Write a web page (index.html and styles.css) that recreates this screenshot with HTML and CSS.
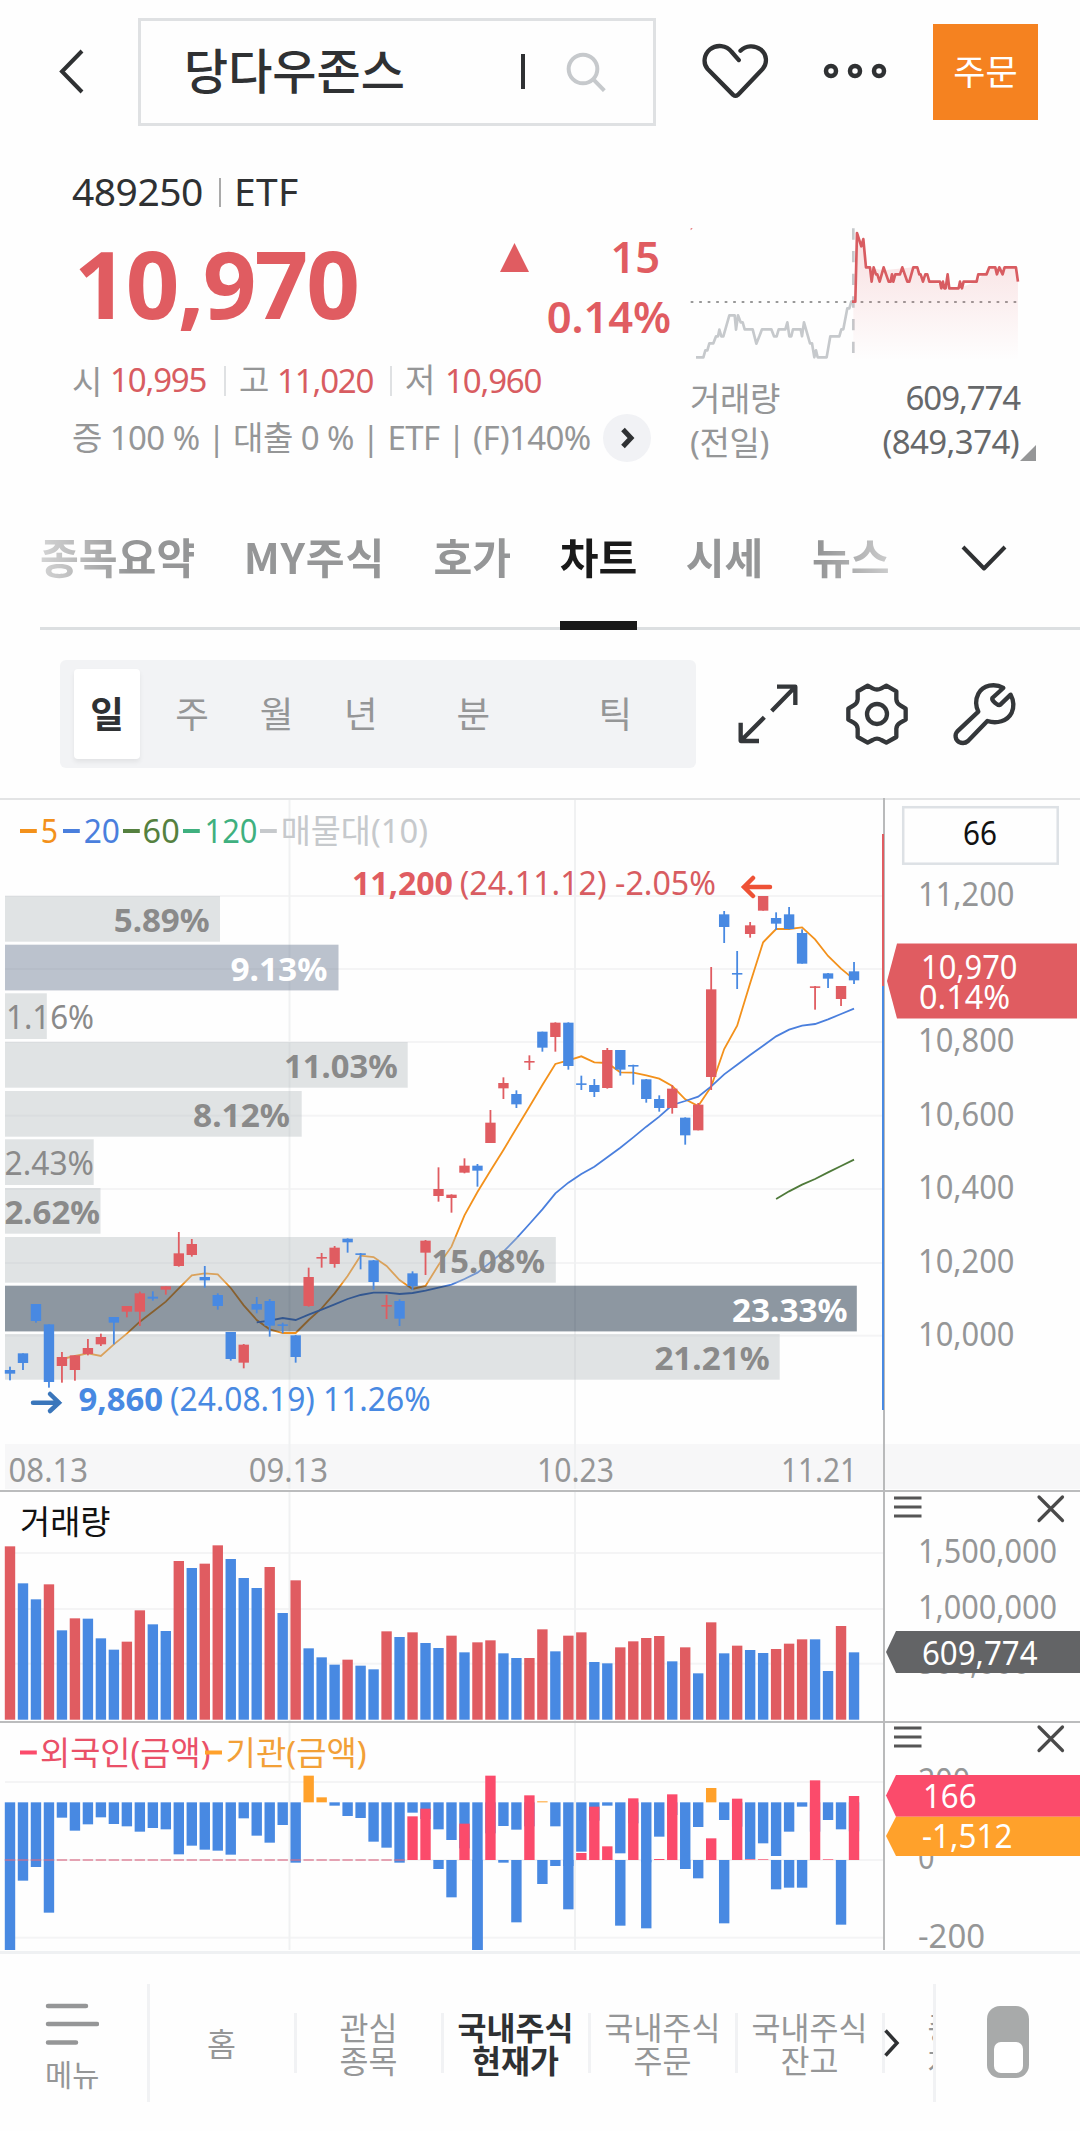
FILE: index.html
```html
<!DOCTYPE html>
<html lang="ko">
<head>
<meta charset="utf-8">
<title>당다우존스 차트</title>
<link rel="stylesheet" href="styles.css">
</head>
<body>
<header class="topbar">
  <svg class="back" viewBox="0 0 138 144"><path d="M82 51 62 71.500 82 92"/></svg>
  <div class="search">
    <span class="search-text">당다우존스</span>
    <i class="cursor"></i>
    <svg class="search-icon" viewBox="78 98 120 120"><circle cx="129" cy="149" r="43"/><path d="M160 180 193 214"/></svg>
  </div>
  <svg class="heart" viewBox="483 66 208 174"><path d="M597 120 575 95C560 75 530 72 510 88C492 103 488 130 503 147L580 225Q587 231 594 225L668 148C684 130 682 103 663 88C644 74 618 76 602 92"/></svg>
  <svg class="more" viewBox="0 0 66 20"><circle cx="9" cy="10" r="5"/><circle cx="33" cy="10" r="5"/><circle cx="57" cy="10" r="5"/></svg>
  <button class="order">주문</button>
</header>

<section class="quote">
  <div class="quote-main">
    <div class="code"><span class="code-num">489250</span><i></i><span>ETF</span></div>
    <div class="price-row">
      <strong class="price">10,970</strong>
      <svg class="up" viewBox="0 0 29 29"><path d="M14.500 0 29 29H0z"/></svg>
      <div class="change"><span class="diff">15</span><span>0.14%</span></div>
    </div>
    <div class="ohl">
      <span class="ohl-item"><em>시</em><b>10,995</b></span>
      <span class="ohl-item"><em>고</em><b>11,020</b></span>
      <span class="ohl-item"><em>저</em><b>10,960</b></span>
    </div>
    <div class="margin-row">
      <span class="margin-text">증 100 % | 대출 0 % | ETF | (F)140%</span>
      <span class="go"><svg viewBox="0 0 48 48"><path d="M20 15.500 28 24 20 32.500"/></svg></span>
    </div>
  </div>
  <div class="quote-side">
    <svg class="spark" viewBox="88 80 1000 400">
      <defs><linearGradient id="fade" x1="0" y1="0" x2="0" y2="1"><stop offset="0" stop-color="#e05c61" stop-opacity=".2"/><stop offset="1" stop-color="#e05c61" stop-opacity="0"/></linearGradient></defs>
      <path d="M578 84V460" stroke="#c6c9cc" stroke-width="8" stroke-dasharray="34 34"/>
      <path d="M90 305H1070" stroke="#999" stroke-width="6" stroke-dasharray="8 17.500"/>
      <path fill="url(#fade)" d="M578 304 584 304 589 98 602 138 608 116 616 201 669 210 758 201 806 244 894 264 948 244 986 201 1066 201 1072 244V480H578z"/>
      <polyline class="prev" points="106,471 128,471 134,450 140,450 146,429 158,429 166,408 172,408 176,388 182,408 188,408 206,345 222,345 226,388 232,345 240,366 246,366 252,387 276,387 287,430 296,408 304,387 332,387 340,408 348,408 354,387 374,387 380,366 386,408 392,408 397,387 420,387 424,408 430,366 448,429 454,429 461,471 466,450 471,471 498,471 509,408 536,408 542,387 548,387 560,324 566,324 572,304 578,304"/>
      <polyline class="today" points="574,304 584,304 589,98 602,138 608,116 616,201 628,201 633,244 639,201 646,222 650,222 657,244 669,201 684,244 690,244 694,222 698,244 704,222 718,222 725,201 740,244 746,244 758,201 770,201 776,222 780,222 787,244 794,222 800,222 806,244 838,244 842,264 847,244 851,264 855,264 861,222 866,264 894,264 898,244 904,264 909,244 948,244 953,222 978,222 986,201 1004,201 1009,222 1016,201 1026,222 1032,201 1066,201 1072,244"/>
      <path d="M90 84h6l-6 6z" fill="#e05c61"/>
    </svg>
    <div class="vol"><span>거래량</span><b>609,774</b></div>
    <div class="vol"><span>(전일)</span><b class="prev-vol">(849,374)</b><i class="corner"></i></div>
  </div>
</section>

<nav class="tabs">
  <div class="tab-list">
    <a>종목요약</a><a class="my">MY주식</a><a>호가</a><a class="on">차트</a><a>시세</a><a>뉴스</a>
  </div>
  <svg class="tab-more" viewBox="0 0 50 30"><path d="M4 4 25 25.500 46 4"/></svg>
</nav>

<section class="tools">
  <div class="periods">
    <span class="sel">일</span><span>주</span><span>월</span><span>년</span><span class="wide">분</span><span class="wider">틱</span>
  </div>
  <svg class="tool" viewBox="45 60 204 204"><path class="square" d="M171 80H226V135M226 80 155 153M62 188V243H117M62 243 133 172"/></svg>
  <svg class="tool" viewBox="366 60 204 204"><path d="M440 77 455 85Q468 92 481 85L496 77 526 94V118Q527 130 538 136L554 146V179L538 188Q527 194 526 206V231L496 248 481 240Q468 232 455 240L440 248 410 231V206Q409 194 398 188L382 179V146L398 136Q409 130 410 118V94Z"/><circle cx="468" cy="162" r="30"/></svg>
  <svg class="tool" viewBox="693 60 204 204"><path d="M850 84C824 69 789 75 775 101C766 119 767 138 775 155L712 214C703 224 706 240 717 246C727 251 736 250 744 243L802 183C830 192 862 184 875 158C883 139 881 121 872 104L841 134C834 139 814 121 817 114Z"/></svg>
</section>

<svg class="panel" id="price" viewBox="0 798 1080 692" height="692"></svg>
<svg class="panel" id="volume" viewBox="0 1490 1080 231" height="231"></svg>
<svg class="panel" id="investor" viewBox="0 1721 1080 233" height="233"></svg>

<footer class="bottom">
  <div class="menu">
    <svg viewBox="0 0 54 42"><path d="M3 3H41M3 21H52M3 39.500H31"/></svg>
    <span>메뉴</span>
  </div>
  <div class="links">
    <a>홈</a><a>관심<br>종목</a><a class="on">국내주식<br>현재가</a><a>국내주식<br>주문</a><a>국내주식<br>잔고</a><a>종합<br>차트</a>
    <svg class="next" viewBox="0 0 16 30"><path d="M1.500 2.500 13 15 1.500 27.500"/></svg>
  </div>
  <div class="toggle"><i></i></div>
</footer>
<script src="chart.js"></script>
</body>
</html>
```
FILE: styles.css
```css
* { box-sizing: border-box; }
body {
  margin: 0;
  width: 1080px;
  height: 2131px;
  overflow: hidden;
  background: #fefefe;
  color: #2f3133;
  font-family: "Noto Sans", "Noto Sans CJK KR", sans-serif;
}
svg { display: block; fill: none; }
b, em { font-weight: inherit; font-style: normal; }

/* top bar */
.topbar {
  display: grid;
  grid-template-columns: 138px 518px 160px 117px 105px;
  height: 144px;
  align-items: start;
}
.back { width: 138px; height: 144px; stroke: #2f3133; stroke-width: 4; }
.search {
  height: 108px;
  margin-top: 18px;
  border: 3px solid #dfe1e3;
  display: flex;
  align-items: center;
  padding: 0 47px 0 43px;
}
.search-text { font: 500 48px/100px "Noto Sans CJK KR", sans-serif; width: 337px; margin-top: -8px; }
.cursor { width: 4px; height: 35px; background: #2f3133; margin: 0 auto 2px 0; }
.search-icon { width: 40px; height: 40px; stroke: #c6c9cc; stroke-width: 12; }
.heart { width: 69px; height: 58px; margin: 42px 0 0 45px; stroke: #2f3133; stroke-width: 13; stroke-linecap: round; stroke-linejoin: round; }
.more { width: 66px; height: 20px; margin: 61px 0 0 6px; stroke: #2f3133; stroke-width: 4.500; }
.order {
  height: 96px;
  margin: 24px 0 0;
  padding: 0 0 6px;
  border: 0;
  background: #f58220;
  color: #fff;
  font: 400 35px "Noto Sans CJK KR", sans-serif;
}

/* quote */
.quote { display: grid; grid-template-columns: 617px 1fr; height: 346px; padding: 24px 0 0 73px; }
.quote-main { color: #959697; }
.code { display: flex; align-items: center; height: 44px; margin: 0 0 2px -1px; font-size: 39px; color: #2f3133; font-weight: 390; }
.code-num { width: 147px; letter-spacing: -.5px; }
.code i { width: 2px; height: 29px; margin: 4px 13px 0 0; background: #aaa; }
.code span:last-child { letter-spacing: .3px; }
.price-row { display: flex; align-items: center; height: 144px; color: #e05c61; font-weight: 600; }
.price { width: 427px; padding-left: 1px; font-size: 94px; line-height: 138px; font-weight: 680; letter-spacing: -1.900px; margin-top: -6px; }
.up { width: 29px; height: 29px; fill: #e05c61; margin-top: -57px; }
.change { width: 142px; display: flex; flex-direction: column; align-items: flex-end; font-size: 43.500px; line-height: 60px; letter-spacing: -.1px; }
.diff { margin-right: 11px; }
.ohl { display: flex; height: 45px; align-items: center; font-size: 33px; }
.ohl-item { display: flex; width: 166px; }
.ohl-item em { width: 38px; margin: -1px 0 0 -1px; }
.ohl-item b { color: #d85c61; letter-spacing: -1.150px; font-weight: 390; }
.ohl-item + .ohl-item { border-left: 2px solid #dfe1e3; padding-left: 14px; margin-left: -15px; width: 181px; line-height: 30px; }
.ohl-item:last-child em { width: 40px; }
.margin-row { display: flex; height: 70px; align-items: center; font-weight: 390; }
.margin-text { width: 531px; margin: -5px 0 0 -1px; font-size: 33px; letter-spacing: -.580px; white-space: nowrap; }
.go { width: 48px; height: 48px; border-radius: 50%; background: #f1f2f5; }
.go svg { stroke: #2f3133; stroke-width: 5; }
.quote-side { padding-top: 59px; }
.spark { width: 333.300px; height: 133.300px; margin-bottom: 15px; stroke-linejoin: round; stroke-linecap: butt; }
.prev { stroke: #c6c9cc; stroke-width: 8; }
.today { stroke: #d85c61; stroke-width: 8; }
.vol { position: relative; display: flex; justify-content: space-between; width: 330px; height: 44px; align-items: center; font-size: 33px; font-weight: 390; color: #959697; letter-spacing: -.4px; }
.vol b { color: #66686a; letter-spacing: -1.100px; }
.vol .prev-vol { letter-spacing: -.600px; margin-right: 1px; }
.corner { position: absolute; left: 330px; bottom: 2px; border: 8.500px solid transparent; border-right-color: #959697; border-bottom-color: #959697; }

/* tabs */
.tabs { position: relative; display: flex; height: 140px; padding-left: 40px; }
.tabs::after { content: ""; position: absolute; left: 40px; right: 0; bottom: 0; height: 3px; background: #dcdfe1; }
.tab-list { position: relative; z-index: 1; display: flex; gap: 48.500px; width: 919px; mask-image: linear-gradient(90deg, #0006, #000 90px, #000 780px, #0006 860px); }
.tab-list a { position: relative; font: 700 42.200px/131px "Noto Sans CJK KR", sans-serif; color: #959697; white-space: nowrap; }
.tab-list .my { letter-spacing: .8px; }
.tab-list .on { color: #191919; }
.tab-list .on::after { content: ""; position: absolute; left: 0; right: 0; bottom: 0; height: 9px; background: #191919; }
.tab-more { width: 50px; height: 30px; margin-top: 53px; stroke: #2f3133; stroke-width: 4; stroke-linejoin: round; }

/* chart toolbar */
.tools { display: flex; height: 168px; padding: 30px 0 0 60px; }
.periods { display: flex; width: 636px; height: 108px; padding: 9px 0 9px 14px; border-radius: 6px; background: #f2f3f5; margin-right: 39px; }
.periods span { width: 84.300px; text-align: center; font: 400 36.500px/87px "Noto Sans CJK KR", sans-serif; color: #959697; }
.periods .sel { width: 66px; margin-right: 10px; background: #fff; color: #2f3133; font-weight: 700; border-radius: 4px; box-shadow: 0 3px 5px #0001; }
.periods .wide { width: 141px; }
.periods .wider { width: 143px; }
.tool { width: 68px; height: 68px; margin: 20px 40px 0 0; stroke: #34373a; stroke-width: 13; stroke-linejoin: round; }

/* chart */
.panel { width: 1080px; font-size: 33px; font-weight: 380; }
.panel .bold { font-weight: 700; }

/* bottom navigation */
.bottom { display: flex; height: 177px; padding-top: 30px; font-family: "Noto Sans CJK KR", sans-serif; color: #959697; }
.menu { width: 149.500px; height: 118px; border-right: 3px solid #f1f2f4; padding: 19px 0 0 45px; font-size: 29.500px; line-height: 30px; }
.menu svg { width: 54px; height: 42px; margin-bottom: 13px; stroke: #959697; stroke-width: 4.500; stroke-linecap: round; }
.links { position: relative; display: flex; width: 786px; height: 118px; border-right: 3px solid #f1f2f4; overflow: hidden; align-items: center; }
.links a { flex: none; display: grid; place-items: center; align-content: center; width: 147px; height: 60px; border-right: 3px solid #f1f2f4; font-size: 31.500px; line-height: 33.500px; text-align: center; }
.links .on { color: #2f3133; font-weight: 700; }
.next { position: absolute; left: 734px; top: 44px; width: 16px; height: 30px; stroke: #2f3133; stroke-width: 3.500; }
.toggle { width: 42px; height: 72px; margin: 22px 0 0 51px; padding: 36px 6px 0 7px; border-radius: 13px; background: #a8aaaa; }
.toggle i { display: block; height: 31px; border-radius: 7px; background: #fff; }
```
FILE: chart.js
```js
const RED = '#e05c61', BLUE = '#4889e2', PINK = '#fb4b6b', AMBER = '#ffa12b';
const STEP = 12.985, FIRST = 10, BODY = 10.4;
const cx = i => FIRST + i * STEP;

const rect = (x, y, w, h, fill, extra = '') => `<rect x="${x}" y="${y}" width="${w}" height="${h}" fill="${fill}" ${extra}/>`;
const hline = (y, x2 = 884) => rect(5, y - 1, x2 - 5, 2, '#f4f4f5');
const vline = (x, y1, y2) => rect(x, y1, 2, y2 - y1, '#f0f1f2');
const text = (x1, x2, y, s, fill, cls = '') =>
  `<text x="${x1 - 1}" y="${y}" fill="${fill}" class="${cls}" textLength="${x2 - x1 + 2}" lengthAdjust="spacingAndGlyphs">${s}</text>`;
const poly = (pts, color) => `<polyline points="${pts.map(p => p.join()).join(' ')}" stroke="${color}" stroke-width="1.8"/>`;
const series = (start, ys, color) => poly(ys.map((y, k) => [cx(start + k), y]), color);

/* ---- price ---- */
// direction, high, body top, body bottom, low
const lower = `B650,660,671,691 B610,610,639,660 B462,462,513,518 B523,523,696,713 R606,621,648,698 R616,616,660,692 R567,594,612,616 R551,561,583,588 B501,501,518,583 R468,468,485,502 R425,430,485,528 B424,440,446,452 R409,409,419,434 R246,310,348,350 R267,282,315,320 B348,381,391,413 B430,435,468,479 B546,546,627,632 R582,584,638,655 B441,462,479,490 B447,453,527,560 B518,523,526,550 B555,556,621,638 R353,381,468,470 R309,321,324,353 R288,293,342,353 B265,266,277,308 B309,310,314,358 B330,331,396,419 R435,465,468,507 B448,453,506,528 B364,370,408,420 R270,272,308,375 R52,117,138,155 R133,134,144,188 R25,47,68,70 B42,47,62,110`;
const upper = `R960,998,1059,1059 R862,879,895,927 B901,912,943,954 R796,813,817,840 B725,725,773,785 R697,698,741,785 B697,698,828,839 B857,880,883,900 B867,885,906,921 R774,780,894,896 B780,780,839,857 B824,825,828,884 B867,868,927,938 B916,927,954,965 R886,896,954,971 B982,983,1036,1064 R939,944,1021,1021 R531,598,861,900 B363,373,411,459 B483,549,553,597 R396,406,432,443 R318,318,362,362 B367,384,401,420 B351,373,417,418 B418,429,521,521 R588,589,593,659 B549,550,566,594 R588,588,627,648 B516,544,571,582`;
const parse = (s, base) => s.split(' ').map(c => ({ c: c[0] === 'R' ? RED : BLUE, v: c.slice(1).split(',').map(n => base + n / 3) }));
const candles = [...parse(lower, 1150), ...parse(upper, 790)];
const scale = (base, a) => a.map(n => base + n / 3);

const ma5 = [...scale(1150, [627,618,610,618,583,551,515,485,455,415,376,370,373,414,466,510,538,549,549,510,475,430,378,317,321,348,390,417,408,345,290,196,126,62]),
  ...scale(790, [1080,1015,950,885,822,811,799,817,819,847,848,856,866,888,928,948,890,777,707,580,457,417,417,412,448,498,536,568])];
const ma20 = [...scale(1150, [517,512,504,510,494,479,463,447,435,428,428,432,429,422,413,404,387,368,337,305,265,222,178,130,98,72,50,22]),
  ...scale(790, [1073,1042,1010,980,945,933,920,889,853,824,795,767,739,719,707,702,688,672,656])];
const ma60 = scale(1150, [147,124,104,87,67,48,29]);

const DARK = '#1b2f43', LIGHT = '#b4bbbe', MID = '#77869c';
const profile = [
  [896, 220, LIGHT, '5.89%', 114.7, 208.7, 1], [944.7, 338.5, MID, '9.13%', 231.4, 326.4, 1],
  [993.3, 46.8, LIGHT, '1.16%', 7, 93, 0], [1042, 407.7, LIGHT, '11.03%', 285, 396.7, 1],
  [1091, 301.7, LIGHT, '8.12%', 194, 289, 1], [1139.3, 93.7, LIGHT, '2.43%', 5.5, 93, 0],
  [1188, 100.5, LIGHT, '2.62%', 5.5, 99, 1], [1237, 555.8, LIGHT, '15.08%', 432.5, 544, 1],
  [1285.7, 856.8, DARK, '23.33%', 733, 846.5, 1], [1334, 779.7, LIGHT, '21.21%', 655.4, 768.6, 1]];

let g = rect(0, 798, 1080, 2, '#e3e4e5') + rect(5, 1444, 1075, 45, '#f7f7f8');
g += [896, 969, 1042, 1115.7, 1189, 1263, 1335.7].map(y => hline(y)).join('');
g += vline(288.5, 800, 1489) + vline(574, 800, 1489);
g += series(4, ma5, '#f3911b') + series(19, ma20, '#4a7fdd') + series(59, ma60, '#4f7a3a');
g += profile.map(([y, r, c]) => rect(5, y, r - 5, 45.7, c, `opacity="${c === LIGHT ? .4 : .5}"`)).join('');
g += candles.map(({ c, v: [h, t, b, l] }, i) =>
  rect(cx(i) - .9, h, 1.8, l - h, c) + rect(cx(i) - BODY / 2, t, BODY, Math.max(b - t, 1.6), c)).join('');
g += profile.map(([y, , c, s, a, b, w]) => text(a, b, y + 36, s, c === LIGHT ? '#8a8a8a' : '#fff', w ? 'bold' : '')).join('');

const legend = [['#f3911b', 20, '5', 41.7, 57], ['#4a7fdd', 63, '20', 84.7, 119], ['#55803f', 123, '60', 143.6, 178.7],
  ['#3fb07f', 183, '120', 205.6, 256.5], ['#c6c9cc', 260, '매물대(10)', 281.7, 427]];
g += legend.map(([c, x, s, a, b]) => rect(x, 829, 16.8, 4, c) + text(a, b, 842.5, s, c)).join('');

g += text(353, 452, 895, '11,200', RED, 'bold') + text(460.7, 715, 895, '(24.11.12) -2.05%', '#d85c61');
g += '<path d="M770 887H744M753 878 744 887 753 896" stroke="#ee5236" stroke-width="4.5" stroke-linecap="round"/>';
g += '<path d="M33 1402.700H59M50 1394 59 1402.700 50 1411" stroke="#3a76bb" stroke-width="4.5" stroke-linecap="round"/>';
g += text(79.5, 162, 1410.5, '9,860', BLUE, 'bold') + text(171, 429.5, 1410.5, '(24.08.19) 11.26%', BLUE);
g += [['08.13', 9.6, 87], ['09.13', 249.7, 327], ['10.23', 538, 613], ['11.21', 782, 856]].map(([s, a, b]) => text(a, b, 1481.5, s, '#959697')).join('');

g += rect(883, 798, 2, 692, '#b9babb') + rect(882, 834, 2, 152, RED) + rect(882, 986, 2, 424, BLUE);
g += rect(903.2, 807.2, 154.5, 56.5, '#fefefe', 'stroke="#dde1e5" stroke-width="2.5"') + text(964, 996, 845.3, '66', '#111');
g += [['11,200', 905.5], ['10,800', 1051.5], ['10,600', 1125.5], ['10,400', 1198.5], ['10,200', 1272.5], ['10,000', 1345.5]]
  .map(([s, y]) => text(919, 1013.5, y, s, '#959697')).join('');
g += `<path d="M887 981 897 943.500H1077V1018.500H897z" fill="${RED}"/>` + text(922, 1016.5, 978.5, '10,970', '#fff') + text(920, 1009, 1008.8, '0.14%', '#fff');
price.innerHTML = g;

/* ---- panel buttons ---- */
const buttons = y => `<path d="M894 ${y + 8}h27.500m-27.500 9h27.500m-27.500 9h27.500" stroke="#555" stroke-width="2.800"/>
  <path d="M1039 ${y + 7}l23.500 23.500m0-23.500l-23.500 23.500" stroke="#4a4a4a" stroke-width="3.200" stroke-linecap="round"/>`;

/* ---- volume ---- */
const vols = 'R169,B280,B328,R283,B421,R385,B386,B445,B479,R455,R361,B403,B423,R213,B234,R221,R166,B207,B264,B294,R231,B369,R271,B475,B502,B524,R509,B527,B538,R424,B441,R427,B459,B474,R437,B487,R457,R451,B490,B504,R504,R418,B484,R437,R427,B516,B520,R472,R454,R444,R438,B514,R472,B550,R397,B490,R467,B480,B489,R477,R461,R448,B448,B543,R408,B487'.split(',');
g = [1553, 1609, 1663.7].map(y => hline(y)).join('') + vline(288.5, 1490, 1721) + vline(574, 1490, 1721);
g += vols.map((s, i) => {
  const y = 1490 + s.slice(1) / 3;
  return rect(cx(i) - BODY / 2, y, BODY, 1719.7 - y, s[0] === 'R' ? RED : BLUE);
}).join('');
g += text(21, 109.5, 1533.5, '거래량', '#111');
g += rect(0, 1490, 1080, 2, '#bbbcbd') + rect(883, 1490, 2, 231, '#b9babb') + buttons(1490);
g += text(919, 1056, 1562.5, '1,500,000', '#959697') + text(919, 1056, 1618.5, '1,000,000', '#959697') + text(919, 1029, 1673.5, '500,000', '#959697');
g += '<path d="M886 1652 896 1631H1080V1673H896z" fill="#636466"/>' + text(923, 1036.5, 1664.7, '609,774', '#fff');
volume.innerHTML = g;

/* ---- investors ---- */
const inst = [1380,1172,1131,1268,983,1022,1003,982,1002,1009,1025,1014,1018,1093,1067,1079,1082,1094,985,1037,1058,1005,1118,857,922,947,978,984,1055,1073,1118,968,987,1018,1050,1075,1380,1030,1008,1019,1009,934,1009,1128,1085,992,947,1090,1000,1117,1040,975,1137,1011,894,990,1010,1107,1060,1098,1025,950,1025,990,1018,1024];
const foreign = [979,956,1137,1222,1001,1380,857,1118,1297,916,1182,1128,1258,1089,950,1069,1307,925,1315,1107,913,1137,1165,1045,1300,926,1108,1108,1198,1193,1193,871,1108,1304,918];
const bar = (i, base, v, up) => {
  const a = 1490 + Math.min(base, v) / 3, b = 1490 + Math.max(base, v) / 3;
  return rect(cx(i) - BODY / 2, a, BODY, b - a, v < base ? up : BLUE);
};
g = [1782, 1860, 1937.7].map(y => hline(y)).join('') + vline(288.5, 1721, 1950) + vline(574, 1721, 1950);
g += inst.map((v, i) => bar(i, 937, v, AMBER)).join('');
for (let i = 0; i < 31; i++) g += rect(cx(i) - BODY / 2, 1859, BODY, 2, '#d96a86', 'opacity=".6"');
g += foreign.map((v, k) => bar(k + 31, 1110, v, PINK)).join('');
g += rect(20, 1750.5, 16.8, 4, PINK) + text(41, 209.5, 1764.5, '외국인(금액)', '#ea5068') + rect(205, 1750.5, 17, 4, AMBER) + text(226.6, 365.7, 1764.5, '기관(금액)', '#f2a037');
g += rect(0, 1721, 1080, 2, '#bbbcbd') + rect(883, 1721, 2, 229, '#b9babb') + buttons(1720);
g += text(919, 969, 1792, '200', '#959697') + text(919, 933.5, 1869, '0', '#959697') + text(919, 984, 1947.5, '-200', '#959697');
g += `<path d="M886 1795.500 896 1775H1080V1816.700H896z" fill="${PINK}"/><path d="M886 1836 896 1816.700H1080V1856H896z" fill="${AMBER}"/>`;
g += text(924, 975.5, 1807.5, '166', '#fff') + text(923, 1011.5, 1848, '-1,512', '#fff') + rect(0, 1951, 1080, 3, '#eff1f3');
investor.innerHTML = g;
```
